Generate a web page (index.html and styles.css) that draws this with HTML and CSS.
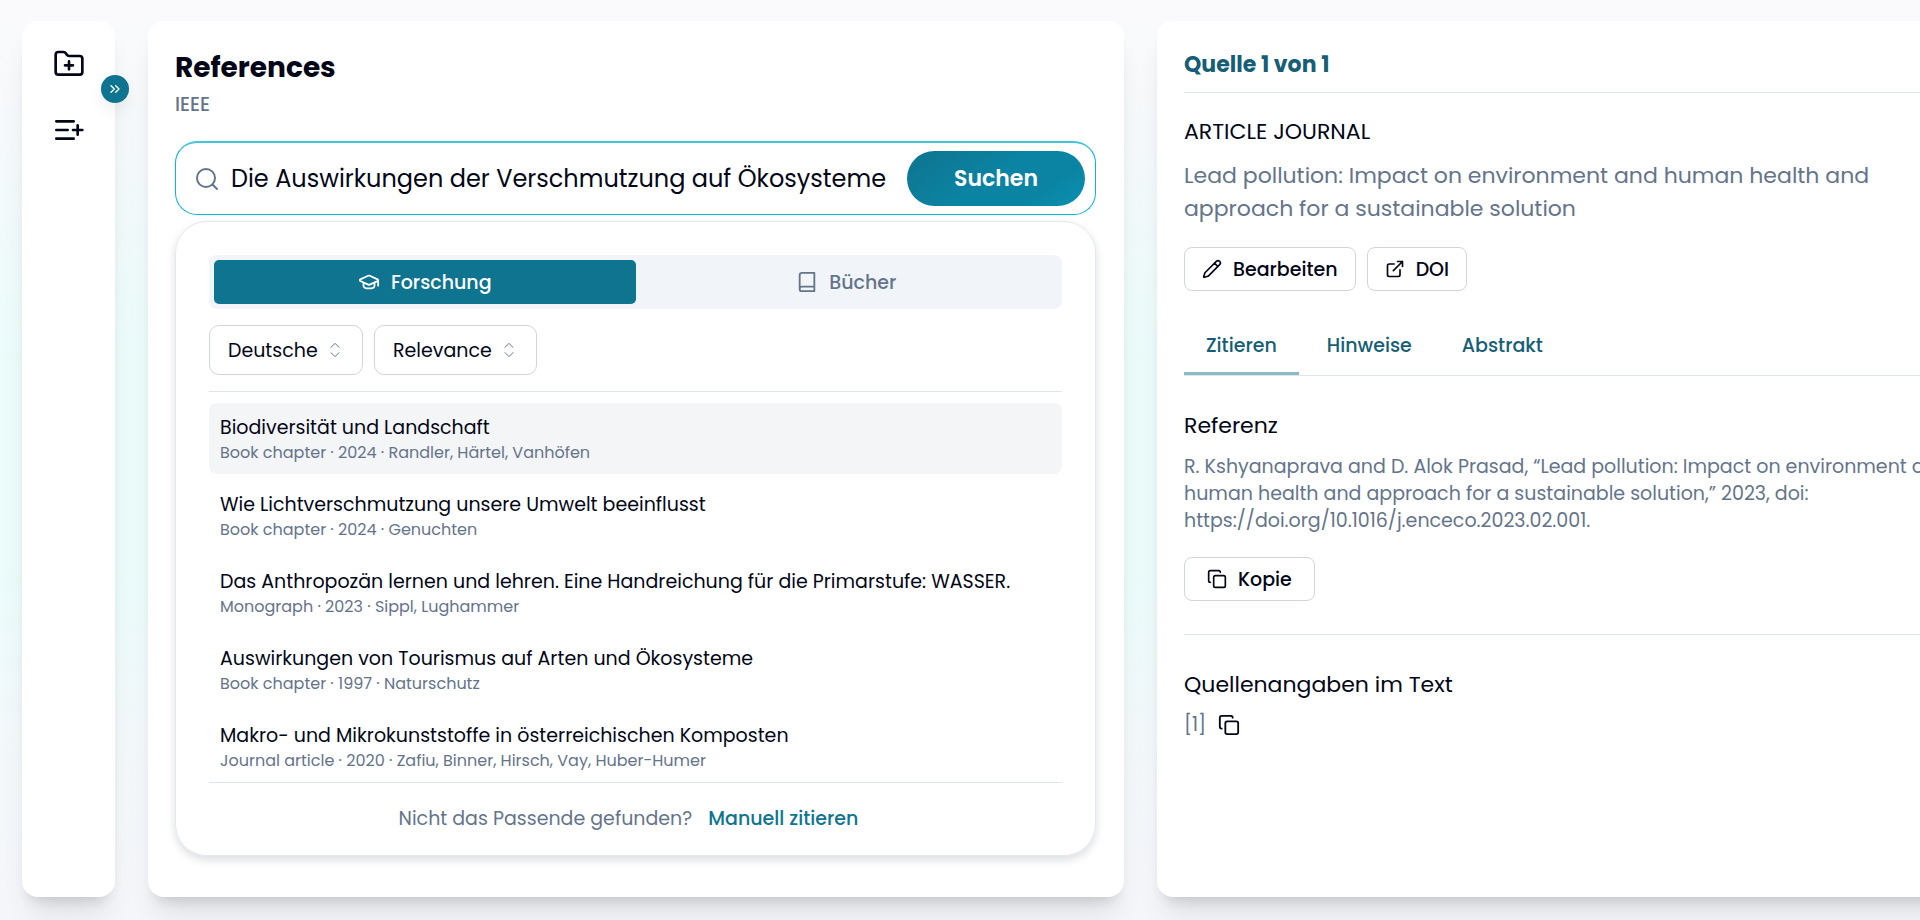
FILE: index.html
```html
<!DOCTYPE html>
<html lang="de">
<head>
<meta charset="utf-8">
<meta name="viewport" content="width=device-width, initial-scale=1">
<title>References</title>
<link rel="stylesheet" href="styles.css">
</head>
<body>
<div class="app">
  <aside class="panel sidebar">
    <button class="icon-button" type="button" aria-label="Neuer Ordner">
      <svg class="icon icon-xl" viewBox="0 0 24 24"><path d="M12 10v6M9 13h6"/><path d="M20 20a2 2 0 0 0 2-2V8a2 2 0 0 0-2-2h-7.900a2 2 0 0 1-1.690-.9L9.600 3.900A2 2 0 0 0 7.930 3H4a2 2 0 0 0-2 2v13a2 2 0 0 0 2 2Z"/></svg>
    </button>
    <button class="icon-button" type="button" aria-label="Zur Liste hinzufügen">
      <svg class="icon icon-xl" viewBox="0 0 24 24"><path d="M2.500 5.500h13M2.500 12h8.500M2.500 18.500h13M18.500 8.500v7M22 12h-7"/></svg>
    </button>
    <button class="expand" type="button" aria-label="Ausklappen">
      <svg class="icon icon-sm" viewBox="0 0 24 24"><path d="m6 17 5-5-5-5M13 17l5-5-5-5"/></svg>
    </button>
  </aside>

  <main class="panel references">
    <h1 class="title">References</h1>
    <p class="style-name">IEEE</p>
    <form class="search">
      <svg class="icon icon-lg muted" viewBox="0 0 24 24"><circle cx="11" cy="11" r="9"/><path d="m22 22-4.500-4.500"/></svg>
      <input class="search-input" type="text" aria-label="Suche" value="Die Auswirkungen der Verschmutzung auf Ökosysteme">
      <button class="search-button" type="button">Suchen</button>
    </form>

    <section class="results-card">
      <div class="switch">
        <button class="switch-item active" type="button">
          <svg class="icon icon-md" viewBox="0 0 24 24"><path d="M21.400 10.900a1 1 0 0 0 0-1.800L12.800 5.200a2 2 0 0 0-1.660 0l-8.600 3.900a1 1 0 0 0 0 1.800l8.600 3.900a2 2 0 0 0 1.660 0zM22 10v6M6 12.500V16a6 3 0 0 0 12 0v-3.500"/></svg>
          Forschung
        </button>
        <button class="switch-item" type="button">
          <svg class="icon icon-md" viewBox="0 0 24 24"><path d="M4 19.500v-15A2.500 2.500 0 0 1 6.500 2H20v20H6.500a2.500 2.500 0 0 1 0-5H20"/></svg>
          Bücher
        </button>
      </div>

      <div class="filters">
        <label class="filter">
          <select class="filter-select" aria-label="Sprache"><option>Deutsche</option></select>
          <svg class="icon icon-sm chevrons" viewBox="0 0 24 24"><path d="m6 8 6-6 6 6M6 16l6 6 6-6"/></svg>
        </label>
        <label class="filter">
          <select class="filter-select" aria-label="Sortierung"><option>Relevance</option></select>
          <svg class="icon icon-sm chevrons" viewBox="0 0 24 24"><path d="m6 8 6-6 6 6M6 16l6 6 6-6"/></svg>
        </label>
      </div>

      <ul class="results">
        <li><button class="result selected" type="button"><span class="result-title">Biodiversität und Landschaft</span><span class="result-meta">Book chapter · 2024 · Randler, Härtel, Vanhöfen</span></button></li>
        <li><button class="result" type="button"><span class="result-title">Wie Lichtverschmutzung unsere Umwelt beeinflusst</span><span class="result-meta">Book chapter · 2024 · Genuchten</span></button></li>
        <li><button class="result" type="button"><span class="result-title">Das Anthropozän lernen und lehren. Eine Handreichung für die Primarstufe: WASSER.</span><span class="result-meta">Monograph · 2023 · Sippl, Lughammer</span></button></li>
        <li><button class="result" type="button"><span class="result-title">Auswirkungen von Tourismus auf Arten und Ökosysteme</span><span class="result-meta">Book chapter · 1997 · Naturschutz</span></button></li>
        <li><button class="result" type="button"><span class="result-title">Makro- und Mikrokunststoffe in österreichischen Komposten</span><span class="result-meta">Journal article · 2020 · Zafiu, Binner, Hirsch, Vay, Huber-Humer</span></button></li>
      </ul>

      <p class="manual">Nicht das Passende gefunden? <a class="manual-link" href="#">Manuell zitieren</a></p>
    </section>
  </main>

  <section class="panel details">
    <h2 class="source-count">Quelle 1 von 1</h2>
    <p class="source-type">ARTICLE JOURNAL</p>
    <p class="source-title">Lead pollution: Impact on environment and human health and<br>approach for a sustainable solution</p>
    <div class="actions">
      <button class="button" type="button">
        <svg class="icon button-icon" viewBox="0 0 24 24"><path d="M21.170 6.800a1 1 0 0 0-3.980-3.980L3.840 16.170a2 2 0 0 0-.5.830l-1.320 4.350a.5.5 0 0 0 .62.620l4.350-1.320a2 2 0 0 0 .83-.5zM15 5l4 4"/></svg>
        Bearbeiten
      </button>
      <button class="button" type="button">
        <svg class="icon button-icon" viewBox="0 0 24 24"><path d="M15 3h6v6M10 14 21 3M18 13v6a2 2 0 0 1-2 2H5a2 2 0 0 1-2-2V8a2 2 0 0 1 2-2h6"/></svg>
        DOI
      </button>
    </div>
    <div class="tabs">
      <button class="tab active" type="button">Zitieren</button>
      <button class="tab" type="button">Hinweise</button>
      <button class="tab" type="button">Abstrakt</button>
    </div>
    <section class="block">
      <h3 class="block-title">Referenz</h3>
      <p class="citation">R. Kshyanaprava and D. Alok Prasad, “Lead pollution: Impact on environment and<br>human health and approach for a sustainable solution,” 2023, doi:<br>https://doi.org/10.1016/j.enceco.2023.02.001.</p>
      <button class="button copy" type="button">
        <svg class="icon button-icon" viewBox="0 0 24 24"><rect x="8" y="8" width="14" height="14" rx="2"/><path d="M4 16c-1.100 0-2-.9-2-2V4c0-1.100.9-2 2-2h10c1.100 0 2 .9 2 2"/></svg>
        Kopie
      </button>
    </section>
    <section class="block in-text">
      <h3 class="block-title">Quellenangaben im Text</h3>
      <div class="in-text-row">
        <span>[1]</span>
        <button class="icon-button" type="button" aria-label="Kopieren">
          <svg class="icon icon-md" viewBox="0 0 24 24"><rect x="8" y="8" width="14" height="14" rx="2"/><path d="M4 16c-1.100 0-2-.9-2-2V4c0-1.100.9-2 2-2h10c1.100 0 2 .9 2 2"/></svg>
        </button>
      </div>
    </section>
  </section>
</div>
</body>
</html>
```
FILE: styles.css
```css
*, *::before, *::after { box-sizing: border-box; }

:root {
  --ink: #020617;
  --muted: #64748b;
  --teal: #0e7490;
  --teal-dark: #155e75;
  --line: #dfe5ec;
  --border: #d1d5db;
}

body {
  margin: 0;
  overflow: hidden;
  color: var(--ink);
  font-family: Poppins, Inter, "Open Sans", sans-serif;
  font-size: 19px;
  background: linear-gradient(180deg, #fafafc 0%, #f6f9fb 14%, #ebfcfb 40%, #ebfcfb 62%, #f3f8fb 80%, #f5f6fa 100%);
}

h1, h2, h3, p, ul { margin: 0; padding: 0; }
button, input, select { font: inherit; color: inherit; }
button { border: 0; background: none; padding: 0; cursor: pointer; }

.app {
  display: grid;
  grid-template-columns: 93px 976fr 837fr;
  gap: 33px;
  width: 105%;
  min-height: 100vh;
  padding: 21px 22px 23px;
}

.panel {
  background: #fff;
  border-radius: 16px;
  box-shadow: 0 24px 30px -8px rgb(0 0 0 / 9%), 0 11px 14px -8px rgb(0 0 0 / 14%);
}

.icon {
  flex: none;
  fill: none;
  stroke: currentColor;
  stroke-width: 2;
  stroke-linecap: round;
  stroke-linejoin: round;
}
.icon-sm { width: 16px; height: 16px; }
.icon-md { width: 22px; height: 22px; }
.icon-lg { width: 24px; height: 24px; }
.icon-xl { width: 32px; height: 32px; }
.button-icon { width: 20px; height: 20px; }
.muted { color: var(--muted); }

.icon-button { display: flex; }

/* Sidebar */
.sidebar {
  position: relative;
  display: flex;
  flex-direction: column;
  align-items: center;
  gap: 34px;
  padding-top: 27px;
}
.expand {
  position: absolute;
  top: 54px;
  right: -14px;
  display: grid;
  place-items: center;
  width: 28px;
  height: 28px;
  border-radius: 50%;
  background: var(--teal);
  color: #fff;
  box-shadow: 0 8px 16px rgb(0 0 0 / 6%);
}

/* References */
.references { padding: 29px 28px 39px 27px; }
.title { font-size: 28px; line-height: 36px; font-weight: 700; }
.style-name { margin-top: 6px; font-size: 19px; line-height: 26px; font-weight: 500; color: var(--muted); }

.search {
  display: flex;
  align-items: center;
  gap: 12px;
  height: 74px;
  margin-top: 23px;
  padding: 0 10px 0 19px;
  border: 1px solid #06b6d4;
  border-top: 2px solid #45c5da;
  border-radius: 22px;
}
.search-input {
  flex: 1;
  min-width: 0;
  padding: 0;
  border: 0;
  outline: 0;
  background: none;
  font-size: 24px;
  line-height: 36px;
}
.search-button {
  width: 178px;
  height: 55px;
  border-radius: 28px;
  background: linear-gradient(145deg, #0e7490, #0b84a3 50%, #0b84a3 75%, #0891b2);
  color: #fff;
  font-size: 22px;
  font-weight: 600;
}

.results-card {
  margin-top: 6px;
  padding: 33px 33px 22px;
  border: 1px solid #e2e8f0;
  border-radius: 32px;
  box-shadow: 0 4px 8px rgb(15 23 42 / 14%);
}

.switch {
  display: grid;
  grid-template-columns: 1fr 1fr;
  padding: 5px;
  border-radius: 8px;
  background: #f1f5f9;
}
.switch-item {
  display: flex;
  align-items: center;
  justify-content: center;
  gap: 11px;
  height: 44px;
  border-radius: 5px;
  color: var(--muted);
  font-weight: 500;
}
.switch-item.active { background: var(--teal); color: #fff; }

.filters { display: flex; gap: 11px; margin-top: 16px; padding-bottom: 16px; border-bottom: 1px solid var(--line); }
.filter { position: relative; display: flex; align-items: center; }
.filter-select {
  appearance: none;
  height: 50px;
  padding: 0 44px 0 18px;
  border: 1px solid var(--border);
  border-radius: 10px;
  background: #fff;
}
.chevrons { position: absolute; right: 20px; color: var(--muted); stroke-width: 1.5; pointer-events: none; }

.results {
  height: 391px;
  padding-top: 11px;
  overflow: hidden;
  list-style: none;
  border-bottom: 1px solid var(--line);
}
.result {
  display: block;
  width: 100%;
  height: 71px;
  margin-bottom: 6px;
  padding: 0 11px;
  border-radius: 8px;
  text-align: left;
}
.result.selected { background: #f4f5f7; }
.result-title, .result-meta { display: block; white-space: nowrap; }
.result-title { line-height: 27px; }
.result-meta { font-size: 16px; line-height: 23px; color: var(--muted); }

.manual { padding: 22px 14px 0 0; text-align: center; line-height: 28px; color: var(--muted); }
.manual-link { margin-left: 11px; color: var(--teal); font-weight: 500; text-decoration: none; }

/* Details */
.details { padding: 27px; }
.source-count {
  padding-bottom: 11px;
  border-bottom: 1px solid var(--line);
  font-size: 22px;
  line-height: 33px;
  font-weight: 700;
  color: var(--teal-dark);
}
.source-type { margin-top: 22px; font-size: 22px; line-height: 33px; }
.source-title { margin-top: 11px; font-size: 22px; line-height: 33px; color: var(--muted); white-space: nowrap; }

.actions { display: flex; gap: 11px; margin-top: 22px; }
.button {
  display: inline-flex;
  align-items: center;
  gap: 11px;
  height: 44px;
  padding: 0 17px;
  border: 1px solid var(--border);
  border-radius: 8px;
  font-weight: 500;
}

.tabs { display: flex; gap: 6px; margin-top: 28px; border-bottom: 1px solid var(--line); }
.tab {
  height: 56px;
  padding: 0 22px;
  border-bottom: 3px solid transparent;
  color: var(--teal-dark);
  font-weight: 500;
}
.tab.active { border-bottom-color: #8fb8c5; }

.block { margin-top: 33px; }
.block-title { font-size: 22px; line-height: 33px; font-weight: 400; }
.citation { margin-top: 11px; line-height: 27px; color: var(--muted); white-space: nowrap; }
.copy { margin-top: 23px; padding: 0 22px; }
.in-text { padding-top: 33px; border-top: 1px solid var(--line); }
.in-text-row { display: flex; align-items: center; gap: 12px; margin-top: 10px; line-height: 28px; color: var(--muted); }
.in-text-row .icon-button { color: var(--ink); }
```
